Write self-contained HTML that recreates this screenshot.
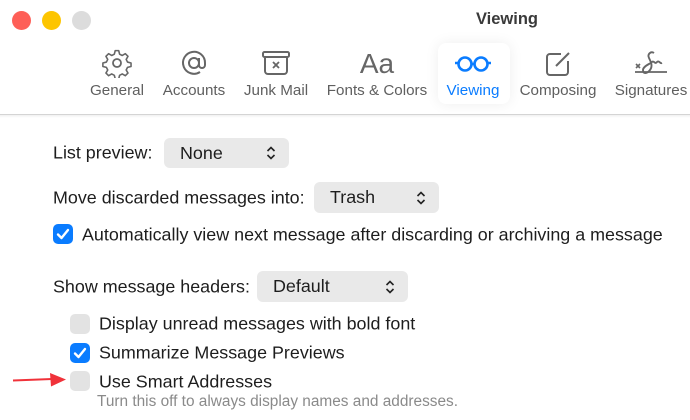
<!DOCTYPE html>
<html><head><style>
*{margin:0;padding:0;box-sizing:border-box}
body{width:690px;height:420px;background:#fff;font-family:"Liberation Sans",sans-serif;position:relative;overflow:hidden;color:#1d1d1d}
.a{position:absolute;white-space:nowrap}
.dot{position:absolute;width:19px;height:19px;border-radius:50%;top:11px}
.lbl{position:absolute;top:82px;font-size:15.2px;color:#5f5f5f;transform:translateX(-50%);white-space:nowrap}
.ic{position:absolute;top:48px;transform:translateX(-50%)}
.t{position:absolute;font-size:17.9px;transform:translateY(-50%);white-space:nowrap}
.dd{position:absolute;background:#e9e9e9;border-radius:6px;font-size:17.9px;padding-left:16px;display:flex;align-items:center}
.dd svg{position:absolute;right:13px;top:50%;margin-top:-7px}
.cb{position:absolute;width:20px;height:20px;border-radius:5px;background:#e3e3e3}
.cb.on{background:#0a7cff}
</style></head><body>
<div class="dot" style="left:12px;background:#fe5f57"></div>
<div class="dot" style="left:42px;background:#fdc500"></div>
<div class="dot" style="left:72px;background:#dcdcdc"></div>
<div class="a" style="left:0;width:1014px;top:10px;text-align:center;font-weight:bold;font-size:16.5px;color:#3a3a3a">Viewing</div>

<div class="a" style="left:438px;top:43px;width:72px;height:61px;border-radius:8px;background:#fff;box-shadow:0 0 14px rgba(0,0,0,0.07)"></div>

<svg class="ic" style="left:117px" width="30" height="30" viewBox="0 0 30 30"><path d="M13 3h4l1 4 3 1.5 3.5-2 3 3-2 3.5 1.5 3 4 1v4l-4 1-1.5 3 2 3.5-3 3-3.5-2-3 1.5-1 4h-4l-1-4-3-1.5-3.5 2-3-3 2-3.5-1.5-3-4-1v-4l4-1 1.5-3-2-3.5 3-3 3.5 2 3-1.5z" transform="scale(0.88) translate(2 0)" fill="none" stroke="#666" stroke-width="1.8" stroke-linejoin="round"/><circle cx="15" cy="15" r="4" fill="none" stroke="#666" stroke-width="1.8"/></svg>
<div class="lbl" style="left:117px">General</div>

<svg class="ic" style="left:194px" width="30" height="30" viewBox="0 0 30 30"><circle cx="15" cy="15" r="5" fill="none" stroke="#666" stroke-width="2"/><path d="M20 10v7a3 3 0 0 0 6 0v-2a11 11 0 1 0-5 9" fill="none" stroke="#666" stroke-width="2"/></svg>
<div class="lbl" style="left:194px">Accounts</div>

<svg class="ic" style="left:276px" width="32" height="30" viewBox="0 0 32 30"><rect x="3" y="4" width="26" height="5" rx="1.5" fill="none" stroke="#666" stroke-width="2"/><path d="M5 9v14a3 3 0 0 0 3 3h16a3 3 0 0 0 3-3V9" fill="none" stroke="#666" stroke-width="2"/><path d="M13 14l6 6M19 14l-6 6" stroke="#666" stroke-width="1.8"/></svg>
<div class="lbl" style="left:276px">Junk Mail</div>

<div class="a" style="left:377px;top:48px;transform:translateX(-50%);font-size:28px;color:#666">Aa</div>
<div class="lbl" style="left:377px">Fonts &amp; Colors</div>

<svg class="ic" style="left:473px" width="44" height="30" viewBox="0 0 44 30"><circle cx="14" cy="16" r="6.5" fill="none" stroke="#0a7cff" stroke-width="2.6"/><circle cx="30" cy="16" r="6.5" fill="none" stroke="#0a7cff" stroke-width="2.6"/><path d="M20.5 16h3M4 15h3.5M36.5 15h3.5" stroke="#0a7cff" stroke-width="2.6"/></svg>
<div class="lbl" style="left:473px;color:#0a7cff">Viewing</div>

<svg class="ic" style="left:558px" width="30" height="30" viewBox="0 0 30 30"><path d="M18 6H7a3 3 0 0 0-3 3v15a3 3 0 0 0 3 3h15a3 3 0 0 0 3-3V13" fill="none" stroke="#666" stroke-width="2"/><path d="M13 18l13-13" stroke="#666" stroke-width="2"/></svg>
<div class="lbl" style="left:558px">Composing</div>

<svg class="ic" style="left:651px" width="40" height="30" viewBox="0 0 40 30"><path d="M4 24h32" stroke="#666" stroke-width="1.8"/><path d="M5 16l4 4M9 16l-4 4" stroke="#666" stroke-width="1.6"/><path d="M23 5c-3-2-7 1-5 5s4 8 1 12-7 4-7 0 7-6 9-8c2-2 3 3 5 0 2-2 3 2 5 1" fill="none" stroke="#666" stroke-width="1.9"/></svg>
<div class="lbl" style="left:651px">Signatures</div>

<div class="a" style="left:0;top:114px;width:690px;height:1px;background:#d4d4d4"></div>
<div class="a" style="left:0;top:115px;width:690px;height:3px;background:linear-gradient(#f0f0f0,#fff)"></div>

<div class="t" style="left:53px;top:153px">List preview:</div>
<div class="dd" style="left:164px;top:138px;width:125px;height:30px">None<svg width="10" height="14" viewBox="0 0 10 14"><path d="M1.5 5L5 1.5 8.5 5M1.5 9L5 12.5 8.5 9" fill="none" stroke="#222" stroke-width="1.6"/></svg></div>

<div class="t" style="left:53px;top:198px">Move discarded messages into:</div>
<div class="dd" style="left:314px;top:182px;width:125px;height:31px">Trash<svg width="10" height="14" viewBox="0 0 10 14"><path d="M1.5 5L5 1.5 8.5 5M1.5 9L5 12.5 8.5 9" fill="none" stroke="#222" stroke-width="1.6"/></svg></div>

<div class="cb on" style="left:53px;top:224px"><svg width="20" height="20" viewBox="0 0 20 20"><path d="M5 10.5l3.5 3.5 6.5-8" fill="none" stroke="#fff" stroke-width="2.4" stroke-linecap="round" stroke-linejoin="round"/></svg></div>
<div class="t" style="left:82px;top:235px">Automatically view next message after discarding or archiving a message</div>

<div class="t" style="left:53px;top:287px">Show message headers:</div>
<div class="dd" style="left:257px;top:271px;width:151px;height:31px">Default<svg width="10" height="14" viewBox="0 0 10 14"><path d="M1.5 5L5 1.5 8.5 5M1.5 9L5 12.5 8.5 9" fill="none" stroke="#222" stroke-width="1.6"/></svg></div>

<div class="cb" style="left:70px;top:314px"></div>
<div class="t" style="left:99px;top:324px">Display unread messages with bold font</div>
<div class="cb on" style="left:70px;top:343px"><svg width="20" height="20" viewBox="0 0 20 20"><path d="M5 10.5l3.5 3.5 6.5-8" fill="none" stroke="#fff" stroke-width="2.4" stroke-linecap="round" stroke-linejoin="round"/></svg></div>
<div class="t" style="left:99px;top:353px">Summarize Message Previews</div>
<div class="cb" style="left:70px;top:371px"></div>
<div class="t" style="left:99px;top:382px">Use Smart Addresses</div>
<div class="t" style="left:97px;top:402px;font-size:15.4px;color:#8a8a8a">Turn this off to always display names and addresses.</div>

<svg class="a" style="left:12px;top:372px" width="56" height="16" viewBox="0 0 56 16"><path d="M1 8.5L40 7" stroke="#f0323a" stroke-width="2"/><path d="M38 1l16 6.5-15 7z" fill="#f0323a"/></svg>
</body></html>
